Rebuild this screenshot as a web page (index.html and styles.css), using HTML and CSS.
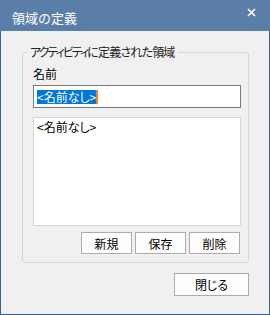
FILE: index.html
```html
<!DOCTYPE html>
<html lang="ja">
<head>
  <meta charset="UTF-8" />
  <title>領域の定義</title>
  <link rel="stylesheet" href="styles.css">
</head>
<body>

  <div class="window">
    <div class="titlebar">
      <span class="title">領域の定義</span>
      <svg class="close-x" width="9" height="9" viewBox="0 0 9 9">
        <path d="M1 1 L8 8 M8 1 L1 8" stroke="#fff" stroke-width="1.6" />
      </svg>
    </div>

    <fieldset class="group">
      <legend><span class="kana">アクティビティ</span>に定義された領域</legend>

      <div class="label">名前</div>
      <div class="textbox"><span class="selected">&lt;名前なし&gt;</span><span class="caret"></span></div>

      <div class="listbox">
        <div class="item">&lt;名前なし&gt;</div>
      </div>

      <div class="button-row">
        <button class="btn">新規</button>
        <button class="btn">保存</button>
        <button class="btn">削除</button>
      </div>
    </fieldset>

    <div class="footer">
      <button class="btn btn-close">閉じる</button>
    </div>
  </div>

</body>
</html>
```

FILE: styles.css
```css
html, body {
  margin: 0;
  padding: 0;
}

body {
  font-family: "Noto Sans CJK JP", "Noto Sans", sans-serif;
  font-size: 12px;
  color: #000;
  background-color: #f0f0f0;
  font-feature-settings: "palt";
}

.window {
  width: 270px;
  height: 315px;
  box-sizing: border-box;
  background-color: #f0f0f0;
  border: 1px solid #3a5f8c;
  border-top: none;
}

.titlebar {
  height: 31px;
  margin: 0 -1px;
  background-color: #5a7ea8;
  color: white;
  display: flex;
  justify-content: space-between;
  align-items: flex-start;
  padding: 10px 0 0 12px;
  box-sizing: border-box;
}

.title {
  font-size: 13px;
  line-height: 16px;
  font-feature-settings: normal;
}

.close-x {
  margin: -2px 14px 0 0;
}

.group {
  margin: 13px 20px 0 21px;
  padding: 6px 7px 8px 10px;
  border: 1px solid #d5d5d5;
  border-radius: 3px;
}

.group legend {
  padding: 0 3px;
  margin-left: -6px;
  line-height: 16px;
  color: #222;
  letter-spacing: -0.8px;
}

.group legend .kana {
  letter-spacing: -2px;
}

.label {
  line-height: 16px;
}

.textbox {
  margin-top: 3px;
  height: 23px;
  box-sizing: border-box;
  border: 1px solid #7a7a7a;
  background-color: white;
  padding: 2px 3px;
  display: flex;
  align-items: center;
}

.selected {
  background-color: #0078d7;
  color: white;
  line-height: 14px;
}

.caret {
  width: 2px;
  height: 14px;
  background-color: #f08020;
}

.listbox {
  margin-top: 9px;
  height: 109px;
  box-sizing: border-box;
  border: 1px solid #d5d5d5;
  background-color: white;
  padding: 2px 3px;
}

.item {
  line-height: 14px;
}

.button-row {
  margin-top: 6px;
  display: flex;
  justify-content: flex-end;
  gap: 3px;
  padding-right: 1px;
}

.btn {
  font-family: inherit;
  font-size: 12px;
  font-feature-settings: "palt";
  width: 51px;
  height: 22px;
  padding: 0;
  border: 1px solid #adadad;
  background-color: #fdfdfd;
  color: #000;
}

.footer {
  display: flex;
  justify-content: flex-end;
  margin: 10px 20px 0 0;
}

.btn-close {
  width: 75px;
  height: 23px;
}
```
